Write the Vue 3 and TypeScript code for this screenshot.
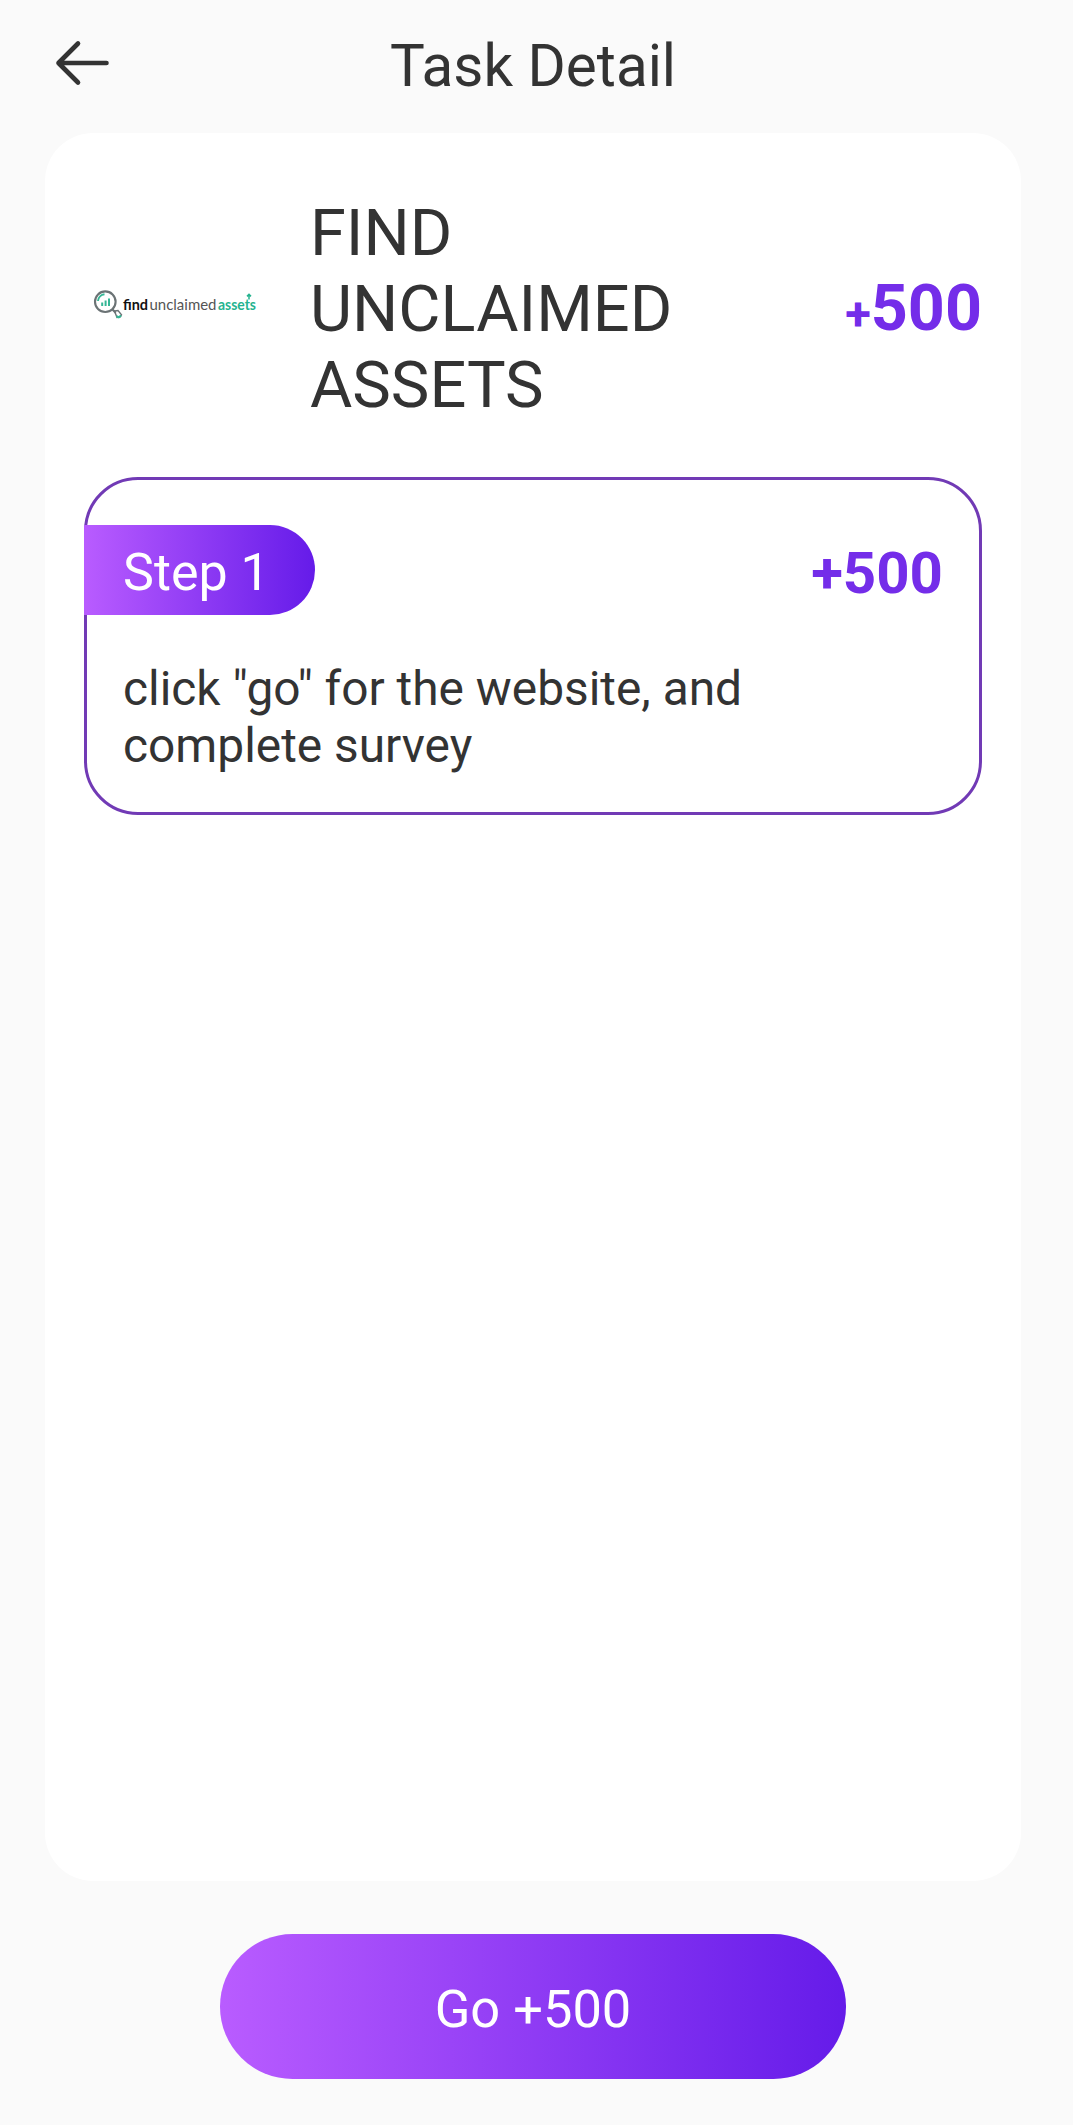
<script setup lang="ts">
interface Step {
  label: string
  reward: string
  description: string
}

const task = {
  title: 'FIND UNCLAIMED ASSETS',
  reward: '500',
}

const steps: Step[] = [
  {
    label: 'Step 1',
    reward: '+500',
    description: 'click "go" for the website, and complete survey',
  },
]
</script>

<template>
  <div class="page">
    <header class="topbar">
      <button class="back" aria-label="Back">
        <svg width="56" height="48" viewBox="0 0 56 48" fill="none" stroke="#333" stroke-width="4.6" stroke-linecap="round" stroke-linejoin="round">
          <path d="M25 4.500 5.500 24 25 43.500M5.500 24H53.500" />
        </svg>
      </button>
      <h1 class="title">Task Detail</h1>
    </header>

    <main class="card">
      <section class="summary">
        <svg class="logo" width="180" height="40" viewBox="0 0 180 40">
          <circle cx="15.300" cy="16.700" r="10.300" fill="none" stroke="#6b7375" stroke-width="2.100" />
          <path d="M8 16a7.500 7.500 0 0 1 6.500-6.700" fill="none" stroke="#35b796" stroke-width="1.900" />
          <path d="M12.200 21v-3.500M15.600 21v-5.500M19 21v-7.500" fill="none" stroke="#35b796" stroke-width="2" />
          <path d="m22.500 24.500 3.200 3.300" fill="none" stroke="#6b7375" stroke-width="2.200" />
          <path d="m24.500 26 3.500-.5 3.500 4.200-1.500 2.500-3 .2z" fill="none" stroke="#6b7375" stroke-width="1.400" />
          <path d="m26.500 31.300 2.300 1 2.300-1.800" fill="none" stroke="#35b796" stroke-width="2.200" />
          <g class="wordmark">
            <text class="word-find" x="33" y="24.500" textLength="25" lengthAdjust="spacingAndGlyphs">find</text>
            <text class="word-unclaimed" x="59.500" y="24.500" textLength="67" lengthAdjust="spacingAndGlyphs">unclaimed</text>
            <text class="word-assets" x="128" y="24.500" textLength="38" lengthAdjust="spacingAndGlyphs">assets</text>
          </g>
          <path d="M159 14.500v-5m-2 1.900 2-2 2 2" fill="none" stroke="#25b38f" stroke-width="1.500" />
        </svg>
        <h2 class="name">{{ task.title }}</h2>
        <p class="reward"><span class="plus">+</span>{{ task.reward }}</p>
      </section>

      <section v-for="step in steps" :key="step.label" class="step">
        <div class="step-head">
          <span class="badge">{{ step.label }}</span>
          <span class="step-reward">{{ step.reward }}</span>
        </div>
        <p class="description">{{ step.description }}</p>
      </section>
    </main>

    <footer class="footer">
      <button class="go">Go +500</button>
    </footer>
  </div>
</template>

<style>
body {
  margin: 0;
  background: #fafafa;
}
</style>

<style scoped>
.page {
  box-sizing: border-box;
  display: flex;
  flex-direction: column;
  width: 1073px;
  height: 2125px;
  padding: 0 52px 46px 45px;
  background: #fafafa;
  color: #333;
  font-family: Roboto, "Liberation Sans", sans-serif;
}

h1,
h2,
p {
  margin: 0;
  font-weight: 400;
}

button {
  padding: 0;
  border: 0;
  background: none;
  font-family: inherit;
}

.topbar {
  display: grid;
  grid-template-columns: 70px 1fr 70px;
  align-items: center;
  flex: none;
  height: 133px;
}

.back {
  display: flex;
  margin: 0 0 7px 8px;
}

.title {
  padding-bottom: 2px;
  font-size: 58.400px;
  line-height: 68px;
  text-align: center;
}

.card {
  flex: none;
  box-sizing: border-box;
  height: 1748px;
  padding: 61px 39px 0;
  border-radius: 48px;
  background: #fff;
}

.summary {
  display: flex;
  align-items: center;
  height: 229px;
}

.logo {
  flex: none;
  margin: -8px 40px 0 6px;
}

.name {
  flex: none;
  width: 400px;
  font-size: 64.900px;
  line-height: 76px;
}

.reward {
  margin: 5px 0 0 auto;
  font-size: 64.600px;
  font-weight: 700;
  line-height: 76px;
  color: #742de9;
}

.plus {
  font-size: 47px;
}

.step {
  box-sizing: border-box;
  height: 338px;
  margin-top: 54px;
  padding-top: 45px;
  border: 3px solid #713ab5;
  border-radius: 54px;
}

.step-head {
  display: flex;
  align-items: center;
  justify-content: space-between;
  margin: 0 36px 0 -3px;
}

.badge {
  box-sizing: border-box;
  width: 231px;
  height: 90px;
  padding-left: 39px;
  border-radius: 0 45px 45px 0;
  background: linear-gradient(90deg, #b95cff, #651be9);
  color: #fff;
  font-size: 52px;
  line-height: 95px;
}

.step-reward {
  padding-top: 6px;
  font-size: 58.200px;
  font-weight: 700;
  line-height: 70px;
  color: #742de9;
}

.description {
  width: 700px;
  margin: 46px 0 0 36px;
  font-size: 47.850px;
  line-height: 57px;
}

.footer {
  display: flex;
  justify-content: center;
  flex: none;
  padding: 53px 0 0;
}

.go {
  width: 626px;
  height: 145px;
  border-radius: 73px;
  background: linear-gradient(90deg, #b95cff, #651be9);
  color: #fff;
  font-size: 52.400px;
  line-height: 150px;
  text-align: center;
}

.wordmark {
  font-family: Lato, sans-serif;
  font-size: 16px;
}

.word-find {
  fill: #111;
  font-weight: 700;
}

.word-unclaimed {
  fill: #555;
}

.word-assets {
  fill: #25b38f;
  font-weight: 700;
}
</style>
